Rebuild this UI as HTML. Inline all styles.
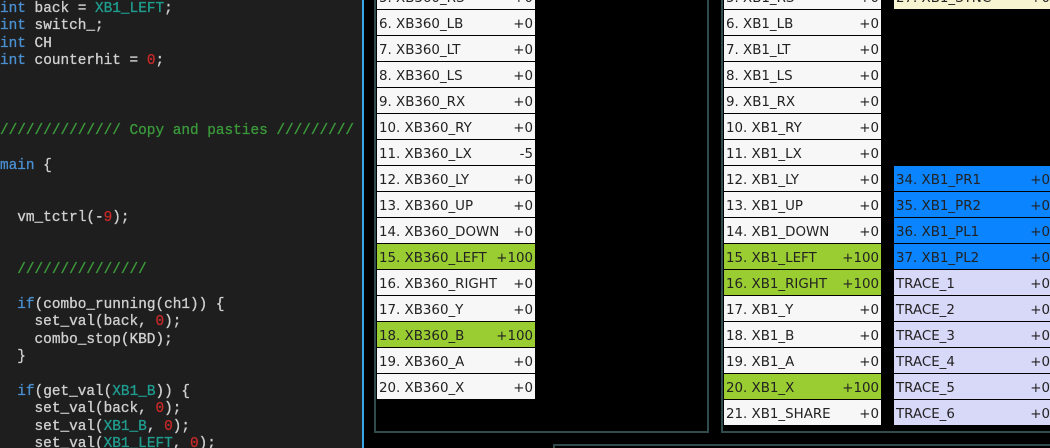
<!DOCTYPE html>
<html><head><meta charset="utf-8"><style>
*{margin:0;padding:0;box-sizing:border-box}
html,body{width:1050px;height:448px;overflow:hidden}
body{background:#000;position:relative;font-family:"DejaVu Sans","Liberation Sans",sans-serif}
#code{position:absolute;left:0;top:0;width:362px;height:448px;background:#1e1e1e;overflow:hidden}
#bl{position:absolute;left:362px;top:0;width:2px;height:448px;background:#3aa8e8}
.ln{position:absolute;left:0;white-space:pre;font-family:"Liberation Mono",monospace;font-size:14.4px;line-height:17px;color:#d0d0d0;top:1px;-webkit-text-stroke:0.3px}
.k{color:#4a8fd0}.c{color:#1f9d8f}.n{color:#c82828}.m{color:#3b9a3b}
.box{position:absolute;border:2px solid #2f4b4b}
.r{position:absolute;height:25px;font-size:13.4px;color:#222;line-height:29px;padding-left:2px;overflow:hidden;white-space:nowrap}
.r span{position:absolute;right:2px;top:0;background:inherit;padding-left:3px}
.w{background:#f7f7f7}.g{background:#9acd32}.b{background:#0a84ff}.l{background:#d8d8f8}.y{background:#f7f4d2}
</style></head><body>
<div id="code">
<div class="ln" style="margin-top:0px"><span class="k">int</span> back = <span class="c">XB1_LEFT</span>;</div>
<div class="ln" style="margin-top:17.4px"><span class="k">int</span> switch_;</div>
<div class="ln" style="margin-top:34.8px"><span class="k">int</span> CH</div>
<div class="ln" style="margin-top:52.2px"><span class="k">int</span> counterhit = <span class="n">0</span>;</div>
<div class="ln m" style="margin-top:121.8px">////////////// Copy and pasties ///////// P</div>
<div class="ln" style="margin-top:156.6px"><span class="k">main</span> {</div>
<div class="ln" style="margin-top:208.8px">  vm_tctrl(-<span class="n">9</span>);</div>
<div class="ln m" style="margin-top:261px">  ///////////////</div>
<div class="ln" style="margin-top:295.8px">  <span class="k">if</span>(combo_running(ch1)) {</div>
<div class="ln" style="margin-top:313.2px">    set_val(back, <span class="n">0</span>);</div>
<div class="ln" style="margin-top:330.6px">    combo_stop(KBD);</div>
<div class="ln" style="margin-top:348px">  }</div>
<div class="ln" style="margin-top:382.8px">  <span class="k">if</span>(get_val(<span class="c">XB1_B</span>)) {</div>
<div class="ln" style="margin-top:400.2px">    set_val(back, <span class="n">0</span>);</div>
<div class="ln" style="margin-top:417.6px">    set_val(<span class="c">XB1_B</span>, <span class="n">0</span>);</div>
<div class="ln" style="margin-top:435px">    set_val(<span class="c">XB1_LEFT</span>, <span class="n">0</span>);</div>
</div>
<div id="bl"></div>
<div class="box" style="left:374px;top:-4px;width:335px;height:437px"></div>
<div class="box" style="left:721px;top:-4px;width:340px;height:437px"></div>
<div class="box" style="left:553px;top:444px;width:497px;height:4px;border-bottom:none;border-right:none"></div>
<div id="rows"></div>
<script>
var L=[["5. XB360_RS","+0","w"],["6. XB360_LB","+0","w"],["7. XB360_LT","+0","w"],["8. XB360_LS","+0","w"],["9. XB360_RX","+0","w"],["10. XB360_RY","+0","w"],["11. XB360_LX","-5","w"],["12. XB360_LY","+0","w"],["13. XB360_UP","+0","w"],["14. XB360_DOWN","+0","w"],["15. XB360_LEFT","+100","g"],["16. XB360_RIGHT","+0","w"],["17. XB360_Y","+0","w"],["18. XB360_B","+100","g"],["19. XB360_A","+0","w"],["20. XB360_X","+0","w"]];
var M=[["5. XB1_RS","+0","w"],["6. XB1_LB","+0","w"],["7. XB1_LT","+0","w"],["8. XB1_LS","+0","w"],["9. XB1_RX","+0","w"],["10. XB1_RY","+0","w"],["11. XB1_LX","+0","w"],["12. XB1_LY","+0","w"],["13. XB1_UP","+0","w"],["14. XB1_DOWN","+0","w"],["15. XB1_LEFT","+100","g"],["16. XB1_RIGHT","+100","g"],["17. XB1_Y","+0","w"],["18. XB1_B","+0","w"],["19. XB1_A","+0","w"],["20. XB1_X","+100","g"],["21. XB1_SHARE","+0","w"]];
var R={0:["27. XB1_SYNC","+0","y"],7:["34. XB1_PR1","+0","b"],8:["35. XB1_PR2","+0","b"],9:["36. XB1_PL1","+0","b"],10:["37. XB1_PL2","+0","b"],11:["TRACE_1","+0","l"],12:["TRACE_2","+0","l"],13:["TRACE_3","+0","l"],14:["TRACE_4","+0","l"],15:["TRACE_5","+0","l"],16:["TRACE_6","+0","l"]};
var h="";
function row(x,w,i,d){return '<div class="r '+d[2]+'" style="left:'+x+'px;width:'+w+'px;top:'+(-16+i*26)+'px">'+d[0]+'<span>'+d[1]+'</span></div>';}
L.forEach(function(d,i){h+=row(377,158,i,d)});
M.forEach(function(d,i){h+=row(724,157,i,d)});
for(var k in R)h+=row(894,158,+k,R[k]);
document.getElementById("rows").innerHTML=h;
</script>
</body></html>
